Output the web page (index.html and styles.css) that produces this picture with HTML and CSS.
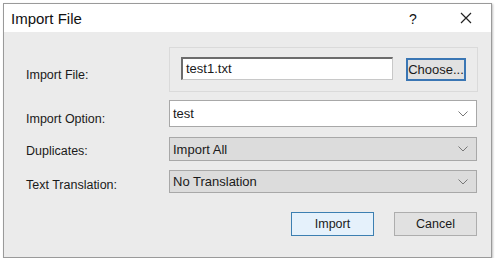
FILE: index.html
```html
<!DOCTYPE html>
<html lang="en">
<head>
    <meta charset="UTF-8">
    <title>Import File</title>
    <link rel="stylesheet" href="styles.css">
</head>
<body>
    <div class="dialog">
        <div class="titlebar">
            <span class="title">Import File</span>
            <span class="help">?</span>
            <span class="close">
                <svg width="12" height="12" viewBox="0 0 12 12"><path d="M1 1L11 11M11 1L1 11" stroke="#222" stroke-width="1.2" fill="none"/></svg>
            </span>
        </div>
        <div class="content">
            <div class="row row-file">
                <div class="label">Import File:</div>
                <div class="file-box">
                    <div class="text-input">test1.txt</div>
                    <button class="button choose">Choose...</button>
                </div>
            </div>
            <div class="row row-option">
                <div class="label">Import Option:</div>
                <div class="combo combo-edit">
                    <span>test</span>
                    <svg class="arrow" width="10" height="6" viewBox="0 0 10 6"><polyline points="0.5,0.5 5,5 9.5,0.5" stroke="#777" fill="none"/></svg>
                </div>
            </div>
            <div class="row row-dup">
                <div class="label">Duplicates:</div>
                <div class="combo combo-list">
                    <span>Import All</span>
                    <svg class="arrow" width="10" height="6" viewBox="0 0 10 6"><polyline points="0.5,0.5 5,5 9.5,0.5" stroke="#777" fill="none"/></svg>
                </div>
            </div>
            <div class="row row-trans">
                <div class="label">Text Translation:</div>
                <div class="combo combo-list">
                    <span>No Translation</span>
                    <svg class="arrow" width="10" height="6" viewBox="0 0 10 6"><polyline points="0.5,0.5 5,5 9.5,0.5" stroke="#777" fill="none"/></svg>
                </div>
            </div>
            <div class="actions">
                <button class="button default">Import</button>
                <button class="button">Cancel</button>
            </div>
        </div>
    </div>
</body>
</html>
```

FILE: styles.css
```css
body {
    margin: 0;
    padding: 3px 0 0 3px;
    background-color: #fff;
    font-family: "Liberation Sans", Arial, sans-serif;
    font-size: 12.5px;
    color: #1a1a1a;
}
.dialog {
    width: 487px;
    height: 253px;
    border: 1px solid #9a9a9a;
    box-shadow: 1px 1px 2px rgba(0,0,0,0.25);
    background-color: #ebebeb;
    display: flex;
    flex-direction: column;
}
.titlebar {
    height: 28px;
    background-color: #fff;
    display: flex;
    align-items: center;
    padding-left: 7px;
}
.title {
    font-size: 15px;
    color: #111;
    flex: 1;
    padding-top: 1px;
}
.help {
    font-size: 14px;
    width: 10px;
    margin-right: 41px;
    color: #111;
    padding-top: 1px;
}
.close {
    width: 12px;
    height: 12px;
    margin-right: 19px;
    display: flex;
}
.content {
    flex: 1;
    padding: 15px 13px 0 22px;
    display: flex;
    flex-direction: column;
}
.row {
    display: flex;
    align-items: center;
}
.row-file {
    height: 45px;
}
.row-option {
    height: 27px;
    margin-top: 8px;
}
.row-dup {
    height: 24px;
    margin-top: 10px;
}
.row-trans {
    height: 23px;
    margin-top: 9px;
}
.label {
    width: 143px;
    flex-shrink: 0;
    padding-top: 7px;
}
.row-file .label,
.row-option .label {
    padding-top: 10px;
}
.row-dup .label {
    padding-top: 4px;
}
.file-box {
    flex: 1;
    height: 45px;
    box-sizing: border-box;
    border: 1px solid #dadada;
    display: flex;
    align-items: center;
    padding: 0 10px 2px 11px;
}
.text-input {
    width: 212px;
    height: 23px;
    box-sizing: border-box;
    background-color: #fff;
    border: 1px solid #c8c8c8;
    border-top: 2px solid #6c6c6c;
    border-left: 2px solid #6c6c6c;
    padding: 1px 3px 0;
    line-height: 18px;
    font-size: 13px;
}
.button {
    font-family: inherit;
    font-size: 12.5px;
    color: #1a1a1a;
    height: 24px;
    width: 83px;
    background-color: #e1e1e1;
    border: 1px solid #adadad;
    padding: 0;
}
.choose {
    width: 60px;
    height: 23px;
    margin-left: 13px;
    margin-top: 2px;
    border: 2px solid #3a76b4;
    font-size: 13px;
}
.combo {
    flex: 1;
    height: 100%;
    box-sizing: border-box;
    display: flex;
    align-items: center;
    justify-content: space-between;
    border: 1px solid #a8a8a8;
    padding: 0 8px 0 3px;
    margin-right: 1px;
    font-size: 13px;
}
.combo-edit {
    background-color: #fff;
}
.combo-list {
    background-color: #dcdcdc;
}
.arrow {
    display: block;
}
.actions {
    display: flex;
    justify-content: flex-end;
    gap: 20px;
    margin-top: 19px;
    padding-right: 1px;
}
.default {
    background-color: #e5f1fb;
    border-color: #3c7fb1;
}
```
